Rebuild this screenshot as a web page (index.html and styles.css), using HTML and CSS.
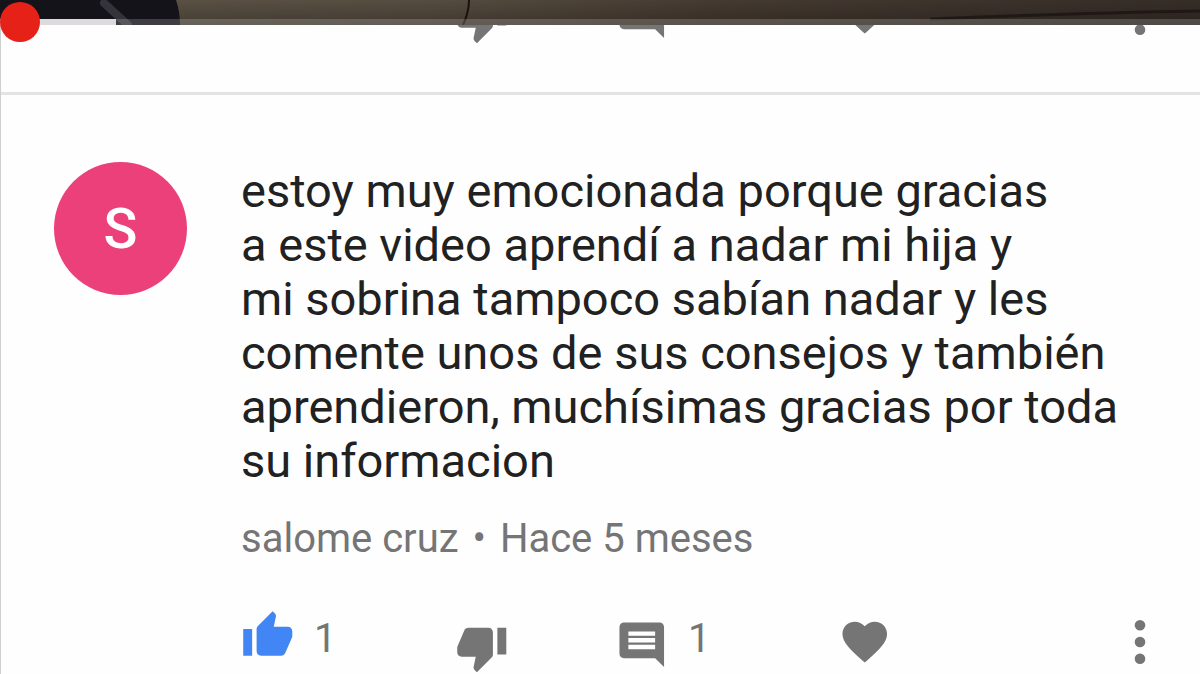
FILE: index.html
```html
<!DOCTYPE html>
<html lang="es">
<head>
<meta charset="utf-8">
<meta name="viewport" content="width=device-width, initial-scale=1">
<title>Comentarios</title>
<link rel="stylesheet" href="styles.css">
</head>
<body>
<svg class="sprite" aria-hidden="true">
  <symbol id="up" viewBox="0 0 54 66"><path transform="scale(2.23)" d="M1 21h4V9H1v12zm22-11c0-1.100-.9-2-2-2h-6.310l.95-4.570.03-.32c0-.41-.17-.79-.44-1.060L14.170 1 7.590 7.590C7.220 7.950 7 8.450 7 9v10c0 1.100.9 2 2 2h9c.83 0 1.540-.5 1.840-1.220l3.020-7.050c.09-.23.14-.47.14-.73z"/></symbol>
  <symbol id="down" viewBox="0 0 54 66"><path transform="translate(0 12) scale(2.230)" d="M15 3H6c-.83 0-1.540.5-1.840 1.220l-3.020 7.050c-.09.23-.14.47-.14.73v2c0 1.100.9 2 2 2h6.310l-.95 4.570-.03.320c0 .41.17.79.44 1.060L9.830 23l6.590-6.590c.36-.36.58-.86.58-1.410V5c0-1.100-.9-2-2-2zm4 0v12h4V3h-4z"/></symbol>
  <symbol id="reply" viewBox="0 0 54 66"><path transform="translate(0 9) scale(2.230)" d="M21.990 4c0-1.100-.89-2-1.990-2H4c-1.100 0-2 .9-2 2v12c0 1.100.9 2 2 2h14l4 4-.01-18zM18 14H6v-2h12v2zm0-3H6V9h12v2zm0-3H6V6h12v2z"/></symbol>
  <symbol id="heart" viewBox="0 0 54 66"><path transform="translate(0 6) scale(2.230)" d="M12 21.350l-1.450-1.320C5.400 15.360 2 12.280 2 8.500 2 5.420 4.420 3 7.500 3c1.740 0 3.410.81 4.500 2.090C13.090 3.810 14.760 3 16.500 3 19.580 3 22 5.420 22 8.500c0 3.780-3.400 6.860-8.550 11.540L12 21.350z"/></symbol>
  <symbol id="more" viewBox="0 0 54 66"><circle cx="27" cy="16.300" r="5.300"/><circle cx="27" cy="33" r="5.300"/><circle cx="27" cy="49.700" r="5.300"/></symbol>
</svg>

<header class="player">
  <svg class="frame" viewBox="0 0 1200 25" preserveAspectRatio="none" aria-hidden="true">
    <defs>
      <linearGradient id="wall"><stop offset="0" stop-color="#5d5445"/><stop offset=".35" stop-color="#564c41"/><stop offset=".6" stop-color="#453a30"/><stop offset="1" stop-color="#352d28"/></linearGradient>
      <linearGradient id="shade" x2="0" y2="1"><stop offset="0" stop-color="#000" stop-opacity="0"/><stop offset="1" stop-color="#000" stop-opacity=".25"/></linearGradient>
    </defs>
    <rect width="1200" height="25" fill="url(#wall)"/>
    <rect width="1200" height="25" fill="url(#shade)"/>
    <path d="M0 0H176Q180 12 180 25H0Z" fill="#15131a"/>
    <path d="M104 3L128 25" stroke="#34323a" stroke-width="8" stroke-linecap="round"/>
    <path d="M469 0Q469 12 463 25" fill="none" stroke="#1b1210" stroke-width="2"/>
    <path d="M930 19Q1080 13 1200 11" fill="none" stroke="#201815" stroke-width="3"/>
  </svg>
  <div class="track"><div class="buffered"></div></div>
  <input class="seek" type="range" min="0" max="100" value="0" aria-label="Posición del video">
</header>

<main class="comments">
  <article class="comment previous">
    <div class="actions">
      <span class="spacer"></span>
      <button class="action" aria-label="No me gusta"><svg><use href="#down"/></svg></button>
      <button class="action" aria-label="Responder"><svg><use href="#reply"/></svg></button>
      <button class="action" aria-label="Corazón"><svg><use href="#heart"/></svg></button>
      <button class="action" aria-label="Más opciones"><svg><use href="#more"/></svg></button>
    </div>
  </article>

  <article class="comment">
    <div class="avatar">S</div>
    <div class="content">
      <p class="text">estoy muy emocionada porque gracias<br>a este video aprendí a nadar mi hija y<br>mi sobrina tampoco sabían nadar y les<br>comente unos de sus consejos y también<br>aprendieron, muchísimas gracias por toda<br>su informacion</p>
      <p class="meta">salome cruz <span class="dot">•</span> Hace 5 meses</p>
      <div class="actions">
        <button class="action liked" aria-label="Me gusta"><svg><use href="#up"/></svg><span>1</span></button>
        <button class="action" aria-label="No me gusta"><svg><use href="#down"/></svg></button>
        <button class="action" aria-label="Responder"><svg><use href="#reply"/></svg><span>1</span></button>
        <button class="action" aria-label="Corazón"><svg><use href="#heart"/></svg></button>
        <button class="action" aria-label="Más opciones"><svg><use href="#more"/></svg></button>
      </div>
    </div>
  </article>
</main>
</body>
</html>
```

FILE: styles.css
```css
* {
  box-sizing: border-box;
}

html {
  overflow: hidden;
}

body {
  margin: 0;
  background: #fefefe;
  color: #212121;
  font-family: Roboto, "Liberation Sans", sans-serif;
}

.sprite {
  position: absolute;
  width: 0;
  height: 0;
}

.player {
  position: relative;
  z-index: 1;
  height: 25px;
}

.frame {
  display: block;
  width: 100%;
  height: 100%;
}

.track {
  position: absolute;
  inset: auto 0 0;
  height: 6px;
  background: rgba(255, 255, 255, 0.18);
}

.buffered {
  width: 116px;
  height: 100%;
  background: #dcdadc;
}

.seek {
  position: absolute;
  top: 2px;
  left: 0;
  width: 100%;
  height: 40px;
  margin: 0;
  appearance: none;
  background: transparent;
}

.seek::-webkit-slider-thumb {
  appearance: none;
  width: 40px;
  height: 40px;
  border: 0;
  border-radius: 50%;
  background: #e62117;
}

.comments {
  border-left: 1px solid #cfcfcf;
}

.comment {
  display: flex;
  padding: 67px 33px 0 53px;
}

.previous {
  height: 70px;
  padding: 0 33px 46px 240px;
  align-items: flex-end;
  overflow: hidden;
  border-bottom: 3px solid #e4e4e4;
}

.avatar {
  display: grid;
  flex: none;
  place-items: center;
  width: 133px;
  height: 133px;
  margin-right: 54px;
  border-radius: 50%;
  background: #ec407a;
  color: #fff;
  font-size: 56px;
  font-weight: 500;
}

.content {
  flex: 1;
}

.text {
  margin: 2px 0 0;
  font-size: 47px;
  line-height: 54px;
}

.meta {
  margin: 27px 0 46px;
  color: #757575;
  font-size: 40px;
  line-height: 48px;
}

.dot {
  margin: 0 4px;
}

.actions {
  display: grid;
  flex: 1;
  grid-template-columns: 214fr 160fr 223fr 275fr 54px;
}

.action {
  display: flex;
  align-items: flex-start;
  gap: 19px;
  height: 66px;
  padding: 0;
  border: 0;
  background: none;
  color: #757575;
  font: 40px/60px Roboto, "Liberation Sans", sans-serif;
}

.action svg {
  flex: none;
  width: 54px;
  height: 66px;
  fill: currentColor;
}

.liked svg {
  color: #4285f4;
}
```
